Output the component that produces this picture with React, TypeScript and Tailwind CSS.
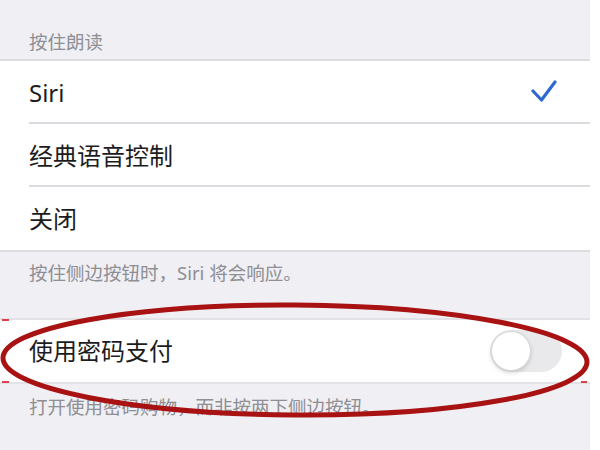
import React from "react";

const font = { fontFamily: '"Noto Sans", "Noto Sans CJK SC", sans-serif' };

function Row({ label, check, divider }: { label: string; check?: boolean; divider?: boolean }) {
  return (
    <div className="relative h-[63px] bg-white flex items-center pl-[29px] pr-[33px]">
      <span className="text-[24px] leading-none text-[#1c1c1e]">{label}</span>
      <div className="flex-1" />
      {check && (
        <svg width="26" height="26" viewBox="0 0 26 26" className="mt-[-4px]">
          <path d="M2 13 L10.5 22 L24 4" fill="none" stroke="#2f68d0" strokeWidth="3.2" strokeLinecap="round" strokeLinejoin="round" />
        </svg>
      )}
      {divider && <div className="absolute left-[29px] right-0 bottom-0 h-[2px] bg-[#dcdce0]" />}
    </div>
  );
}

export default function App() {
  return (
    <div className="w-[600px] h-[450px] bg-white overflow-hidden relative" style={font}>
      <div className="w-[590px] h-full bg-[#efeff4] flex flex-col">
        <div className="h-[59px] flex items-end pl-[29px] pb-[8px]">
          <span className="text-[18.5px] leading-none text-[#8e8e93]">按住朗读</span>
        </div>
        <div className="h-[2px] bg-[#dcdce0]" />
        <Row label="Siri" check divider />
        <Row label="经典语音控制" divider />
        <Row label="关闭" />
        <div className="h-[2px] bg-[#dcdce0]" />
        <div className="h-[66px] pl-[29px] pt-[10px]">
          <span className="text-[18.5px] leading-none text-[#8e8e93]">按住侧边按钮时，Siri 将会响应。</span>
        </div>
        <div className="h-[2px] bg-[#e2e2e6]" />
        <div className="h-[62px] bg-white flex items-center pl-[29px] pr-[28px]">
          <span className="text-[24px] leading-none text-[#1c1c1e]">使用密码支付</span>
          <div className="flex-1" />
          <div className="w-[72px] h-[42px] rounded-full bg-[#e9e9eb] relative">
            <div className="absolute left-[1px] top-[1px] w-[40px] h-[40px] rounded-full bg-white border border-[#d6d6d6] shadow-[0_2px_4px_rgba(0,0,0,0.15)]" />
          </div>
        </div>
        <div className="h-[2px] bg-[#e2e2e6]" />
        <div className="pl-[29px] pt-[12px]">
          <span className="text-[18.5px] leading-none text-[#8e8e93]">打开使用密码购物，而非按两下侧边按钮。</span>
        </div>
      </div>
      <svg className="absolute left-0 top-0 pointer-events-none" width="600" height="450" viewBox="0 0 600 450">
        <ellipse cx="295" cy="360" rx="292" ry="55" fill="none" stroke="#a81212" strokeWidth="5" transform="rotate(0.4 295 360)" />
        <line x1="2" y1="320" x2="9" y2="320" stroke="#e0404a" strokeWidth="2" />
        <line x1="2" y1="382" x2="9" y2="382" stroke="#e0404a" strokeWidth="2" />
        <line x1="581" y1="382" x2="587" y2="382" stroke="#e0404a" strokeWidth="2" />
      </svg>
    </div>
  );
}
